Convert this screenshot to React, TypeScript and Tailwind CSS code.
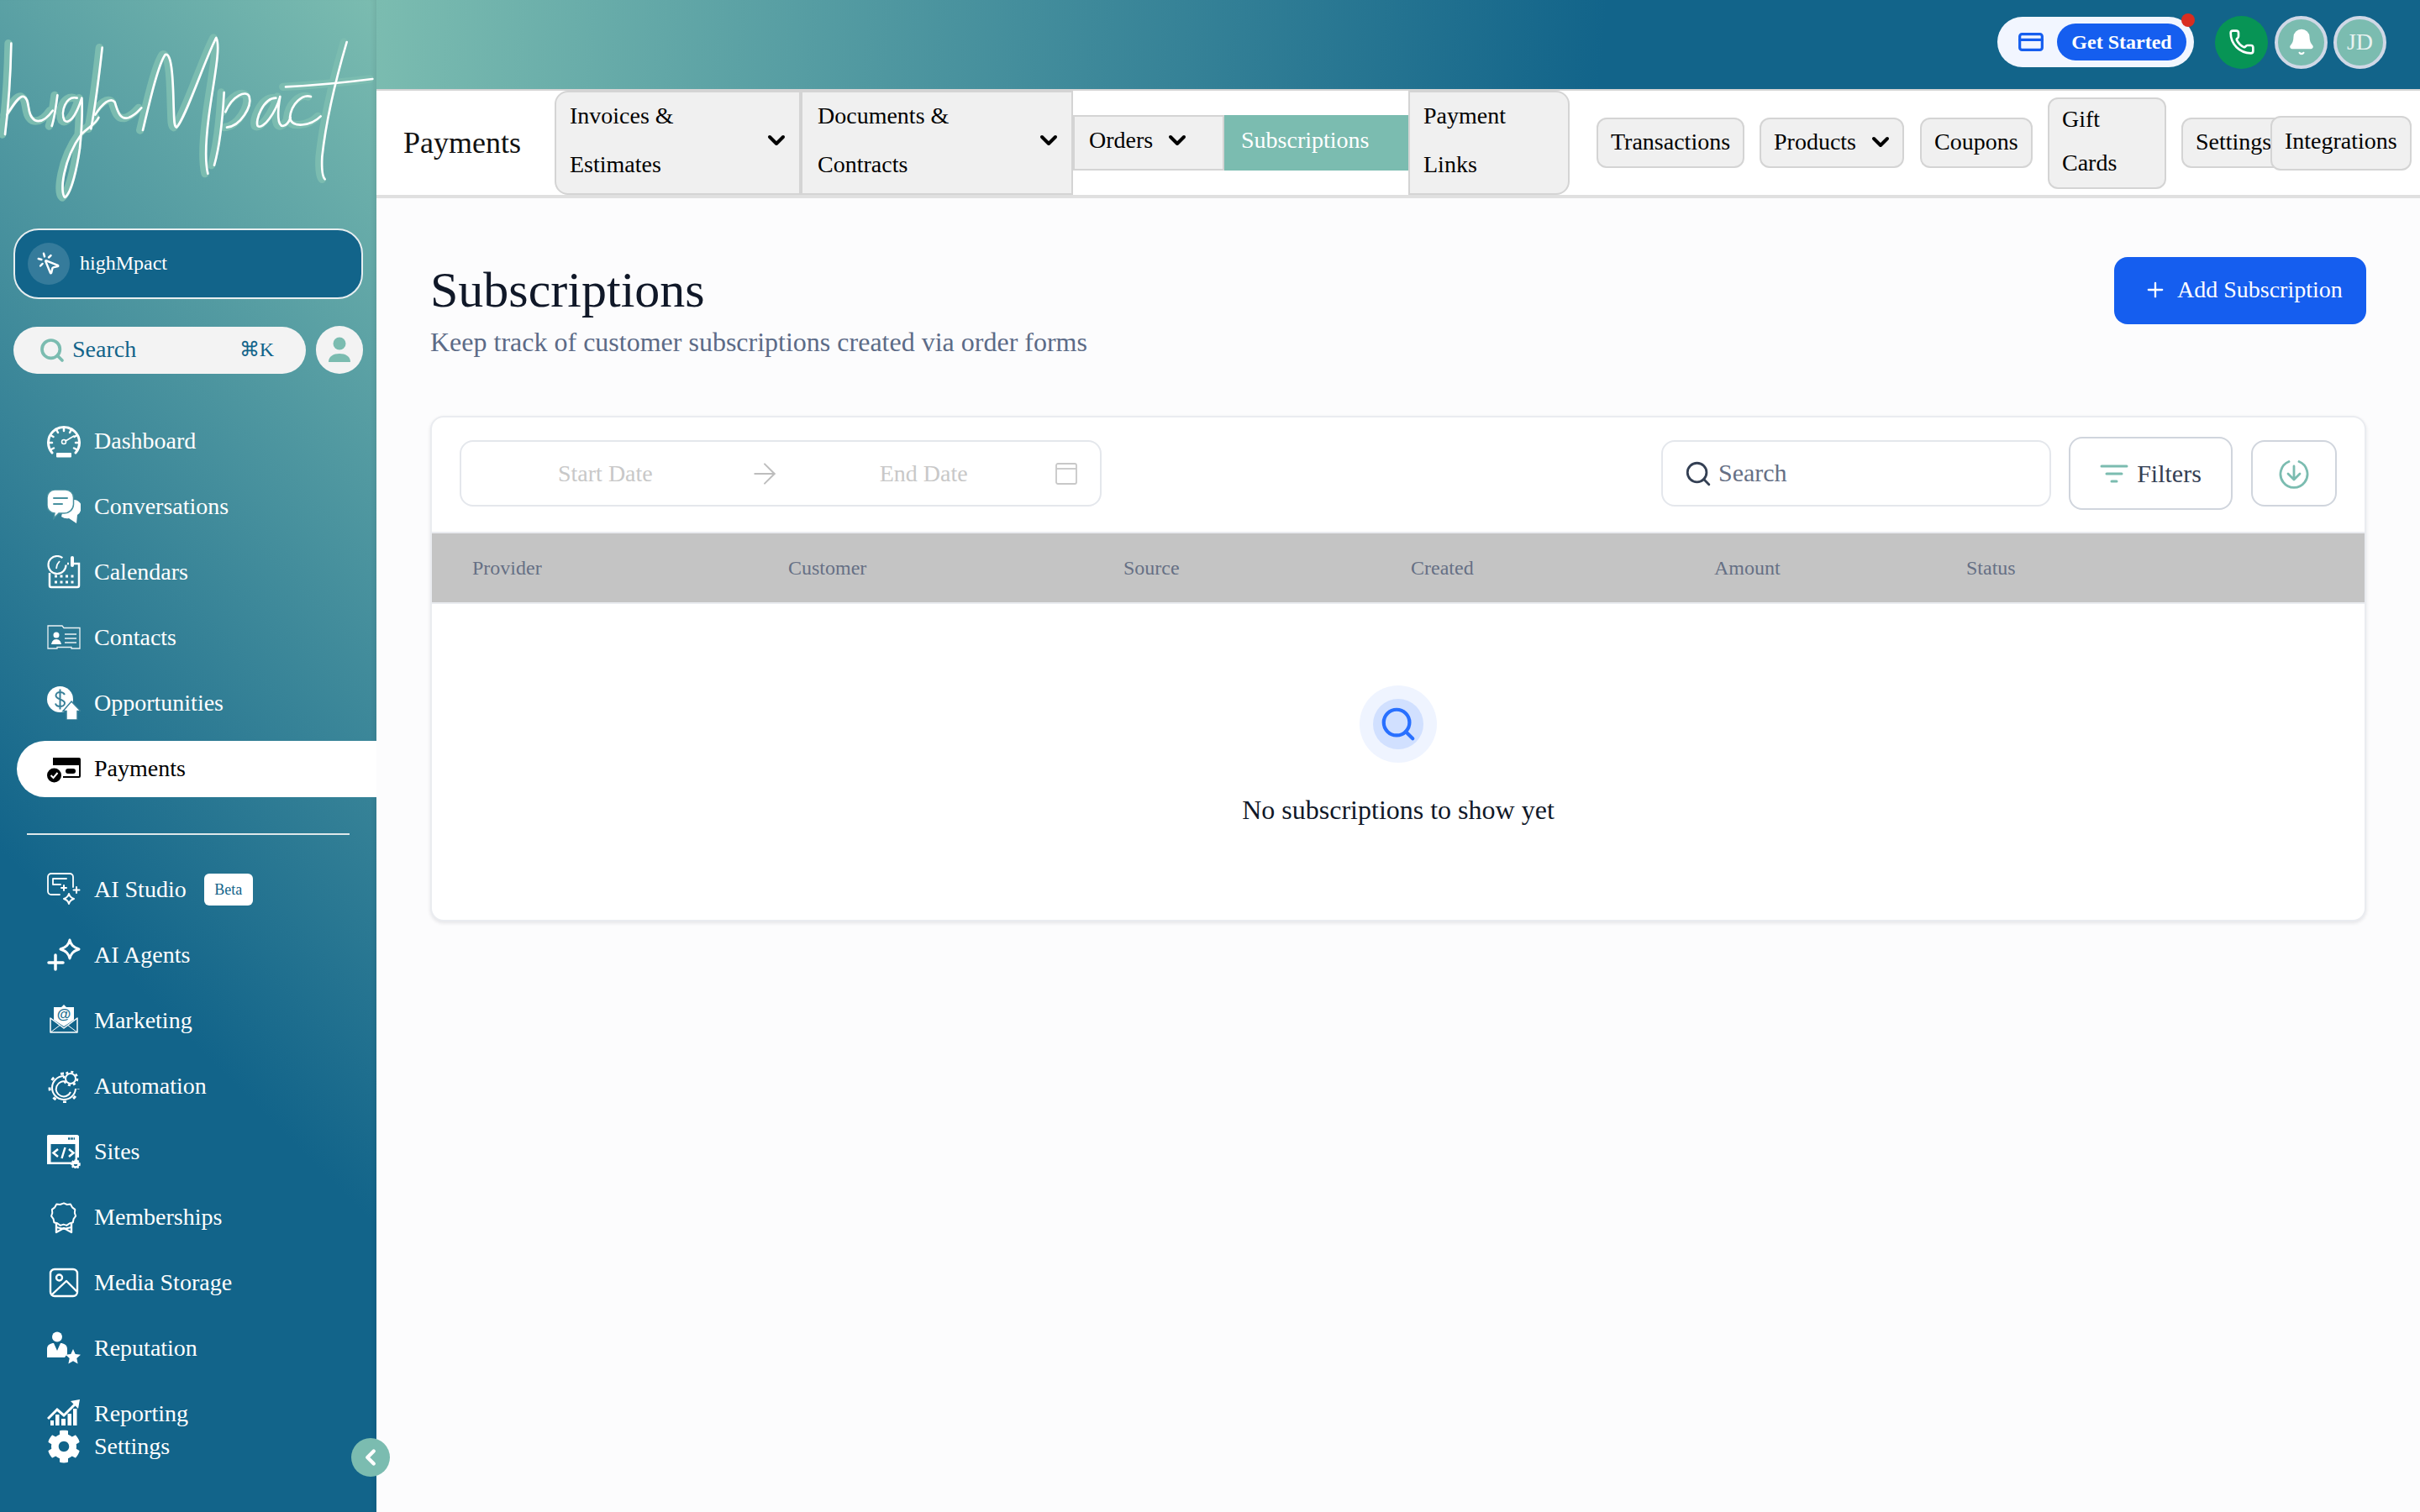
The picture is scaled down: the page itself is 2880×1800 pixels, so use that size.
import type { ReactNode } from "react";
import {
  ArrowRight,
  Bell,
  ChevronDown,
  ChevronLeft,
  CreditCard,
  MousePointerClick,
  Phone,
  Plus,
  Search,
} from "lucide-react";
import { FaCog } from "react-icons/fa";

const logoStrokes = [
  "M40 155 C38 260 28 400 18 480",
  "M25 410 C50 370 70 340 85 345 C110 355 92 410 125 430 C150 440 170 420 188 395",
  "M205 340 C200 380 195 420 185 450",
  "M275 350 C235 340 215 400 230 430 C245 445 270 420 292 350 C296 420 290 480 285 530 C275 600 255 690 232 705 C212 690 225 570 290 480 C320 450 340 445 352 420",
  "M365 170 C355 260 340 380 325 460",
  "M340 410 C365 370 395 345 410 365 C420 400 430 430 460 420 C485 410 495 395 505 385",
  "M510 465 C535 360 565 230 590 195 C615 185 618 300 620 380 C622 420 620 450 630 455 C660 430 740 190 772 135 C790 170 760 300 745 420 C735 500 730 570 742 620",
  "M800 330 C795 420 785 520 765 590",
  "M805 400 C830 340 880 320 890 345 C900 380 860 450 810 455",
  "M985 350 C940 350 910 430 920 450 C940 465 985 400 1000 345 C990 400 990 450 1010 450 C1025 448 1032 435 1037 420",
  "M1110 345 C1080 335 1040 370 1035 420 C1040 460 1110 450 1145 415",
  "M1238 150 C1200 280 1165 420 1150 560 C1148 600 1150 630 1160 640",
  "M1020 310 C1120 305 1230 295 1330 282",
];

function Logo() {
  return (
    <svg viewBox="0 0 1344 720" className="h-[240px] w-[448px] shrink-0" role="img" aria-label="highMpact" fill="none" strokeLinecap="round" strokeLinejoin="round">
      <g stroke="#7bbcb0" strokeWidth="28" transform="translate(-10 0)">
        {logoStrokes.map((d) => (
          <path key={d} d={d} />
        ))}
      </g>
      <g stroke="#ffffff" strokeWidth="8">
        {logoStrokes.map((d) => (
          <path key={d} d={d} />
        ))}
      </g>
    </svg>
  );
}

const box = "h-10 w-10 shrink-0";

const DashboardIcon = () => (
  <svg viewBox="0 0 40 40" className={box} fill="none" stroke="#fff" strokeLinecap="round">
    <path d="M6 34 A18.5 18.5 0 1 1 34 34" strokeWidth="3" />
    <path d="M20 4v4M11 6.5l2 3.5M29 6.500l-2 3.500M4 13l3.500 2M36 13l-3.500 2M2 22h4M38 22h-4M5 30l3-1.500M35 30l-3-1.500" strokeWidth="2.500" />
    <circle cx="20" cy="21" r="2.500" strokeWidth="1.500" />
    <path d="M22 20l10-6" strokeWidth="1.500" />
    <rect x="11" y="34" width="18" height="5.500" rx="1" fill="#fff" stroke="none" />
  </svg>
);

const ConversationsIcon = () => (
  <svg viewBox="0 0 40 40" className={box}>
    <path d="M22 12h9a9 9 0 0 1 9 13 8 8 0 0 1-4 5l-1 10-9-6a12 12 0 0 1-9-2z" fill="#fff" />
    <path d="M9 0h13a9.500 9.500 0 0 1 9.500 9.500v8A11 11 0 0 1 20 28h-6l-6 6 1-6a9.500 9.500 0 0 1-9-9.500v-9A9.500 9.500 0 0 1 9 0z" fill="#fff" stroke="#47909f" strokeWidth="1.500" />
    <path d="M8 10h16M8 17h10" stroke="#47909f" strokeWidth="2" strokeLinecap="round" />
  </svg>
);

const CalendarsIcon = () => (
  <svg viewBox="0 0 40 40" className={box} fill="none" stroke="#fff">
    <path d="M3 21v15a2 2 0 0 0 2 2h31a2 2 0 0 0 2-2V10h-6M26 10h-2" strokeWidth="2.500" />
    <path d="M30 3v9" strokeWidth="4" strokeLinecap="round" />
    <circle cx="12" cy="11.500" r="10.500" strokeWidth="2.200" strokeDasharray="56 10" />
    <path d="M12 11l3-4M12 11l-1 5" strokeWidth="1.800" />
    <path d="M9 25h26M9 32h26" strokeWidth="3" strokeDasharray="3 3.500" />
  </svg>
);

const ContactsIcon = () => (
  <svg viewBox="0 0 40 40" className={box} fill="none" stroke="#fff">
    <path d="M1 6h17l2 2.500h19v24.500h-10v-1.500h-17v1.500h-11z" strokeWidth="1.300" strokeOpacity=".9" />
    <circle cx="11" cy="17" r="3.500" fill="#fff" stroke="none" />
    <path d="M5 28c1-5 4-6 6-6s5 1 6 6z" fill="#fff" stroke="none" />
    <path d="M21 16h14M21 21h14M21 26h14" strokeWidth="1.300" strokeOpacity=".9" />
  </svg>
);

const OpportunitiesIcon = () => (
  <svg viewBox="0 0 40 40" className={box}>
    <circle cx="15.500" cy="15.500" r="15.500" fill="#fff" />
    <path d="M21 10c-1-2-3-3-5.500-3s-5 1.500-5 4 2.500 3.500 5 4.500 5.500 2 5.500 4.500-2.500 4-5.500 4-5-1.500-5.500-3.500M15.500 3.500v24" fill="none" stroke="#377f98" strokeWidth="2" />
    <path d="M29 18l11 11.500h-4V40H23V29.500h-4z" fill="#fff" stroke="#377f98" strokeWidth="1.500" />
  </svg>
);

const PaymentsIcon = () => (
  <svg viewBox="0 0 40 40" className={box}>
    <path d="M7 7h31a2 2 0 0 1 2 2v20a2 2 0 0 1-2 2H19v-2h19V16H7z" fill="#000" />
    <path d="M7 7v8h2v-6h29V7z" fill="#000" />
    <rect x="22" y="20" width="12" height="6" rx="3" fill="#000" />
    <circle cx="8.500" cy="28" r="8.500" fill="#000" />
    <path d="M4.500 28l3 3 5-6" fill="none" stroke="#fff" strokeWidth="2" />
  </svg>
);

const AiStudioIcon = () => (
  <svg viewBox="0 0 40 40" className={box} fill="none" stroke="#fff" strokeWidth="1.800" strokeLinecap="round" strokeLinejoin="round">
    <path d="M15 26H5a4 4 0 0 1-4-4V5a4 4 0 0 1 4-4h22a4 4 0 0 1 4 4v12" />
    <path d="M7 7h16M7 7v7h9" />
    <path d="M20 15v6M17 18h6M35 17v7M31.500 20.500h7" strokeWidth="2" />
    <path d="M26 25c1 4 3 5 6 6-3 1-5 2-6 6-1-4-3-5-6-6 3-1 5-2 6-6z" strokeWidth="2" />
  </svg>
);

const AiAgentsIcon = () => (
  <svg viewBox="0 0 40 40" className={box} fill="none" stroke="#fff" strokeLinecap="round" strokeLinejoin="round">
    <path d="M27 2c1.500 6 4 8.500 11 11-7 2.500-9.500 5-11 11-1.500-6-4-8.500-11-11 7-2.500 9.500-5 11-11z" strokeWidth="3" />
    <path d="M10 20v17M2 29h17" strokeWidth="3.500" />
  </svg>
);

const MarketingIcon = () => (
  <svg viewBox="0 0 40 40" className={box}>
    <path d="M4 17l16 12 16-12v17H4z" fill="none" stroke="#fff" strokeWidth="1.500" strokeLinejoin="round" />
    <path d="M4 34l12-9M36 34l-12-9" stroke="#fff" strokeWidth="1" />
    <path d="M8 4h9l3-3 3 3h9v15l-12 8-12-8z" fill="#fff" />
    <text x="20" y="18" textAnchor="middle" fontSize="17" fontWeight="700" fill="#1e6f90" fontFamily="'Liberation Sans',sans-serif">@</text>
  </svg>
);

const AutomationIcon = () => (
  <svg viewBox="0 0 40 40" className={box} fill="none" stroke="#fff">
    <path d="M20 8a14 14 0 1 0 14 15" strokeWidth="2" />
    <path d="M20 5a17 17 0 1 0 17 18" strokeWidth="3" strokeDasharray="4 9" />
    <path d="M23 15a9 9 0 1 0 5 12" strokeWidth="2" />
    <circle cx="28" cy="11" r="6" strokeWidth="2" />
    <circle cx="28" cy="11" r="8" strokeWidth="2.500" strokeDasharray="3 3.300" />
  </svg>
);

const SitesIcon = () => (
  <svg viewBox="0 0 40 40" className={box}>
    <path d="M2 9h34v26H25v-2.500h8.500V11h-29v21.500H25V35H0V2a1 1 0 0 1 1-1h36a1 1 0 0 1 1 1v25h-2V9H2z" fill="#fff" />
    <rect x="0" y="0" width="37.500" height="9" rx="1.500" fill="#fff" />
    <path d="M25 4.500h8" stroke="#15688b" strokeWidth="2.500" strokeDasharray="2.500 .8" />
    <path d="M13 17l-5.500 4.500L13 26M26 17l5.500 4.500L26 26M21.500 15l-4 13" fill="none" stroke="#fff" strokeWidth="2.500" />
    <circle cx="34" cy="35" r="3.500" fill="none" stroke="#fff" strokeWidth="2.500" />
    <circle cx="34" cy="35" r="5" fill="none" stroke="#fff" strokeWidth="1.500" strokeDasharray="2 1.600" />
  </svg>
);

const MembershipsIcon = () => (
  <svg viewBox="0 0 40 40" className={box} fill="none" stroke="#fff" strokeWidth="2.400" strokeLinejoin="round">
    <path d="M20 2l4.500 2 5-.500 2.500 4.500 4 3-.500 5 1.500 4.500-3 4-1 5-5 1.500-4 3-4.500-1.500-4.500 1.500-4-3-5-1.500-1-5-3-4 1.500-4.500-.500-5 4-3 2.500-4.500 5 .500z" transform="translate(3.400 1.700) scale(.83)" />
    <path d="M11 26v12l9-5 9 5V26" />
    <path d="M11 32l9 2 9-2" strokeWidth="1.800" />
  </svg>
);

const MediaIcon = () => (
  <svg viewBox="0 0 40 40" className={box} fill="none" stroke="#fff" strokeWidth="2.400" strokeLinecap="round" strokeLinejoin="round">
    <rect x="4" y="4" width="32" height="32" rx="5" />
    <circle cx="14.500" cy="14" r="3.500" />
    <path d="M6 34l17-16 12 12" />
  </svg>
);

const ReputationIcon = () => (
  <svg viewBox="0 0 40 40" className={box} fill="#fff">
    <circle cx="12" cy="6.500" r="6" />
    <path d="M0 31V21c0-5 4-7 8-7l4 9 4-9c4 0 8 2 8 7v6l-3 4z" />
    <path d="M31 21l2.700 6 6.300.700-4.700 4.300 1.300 6.500-5.600-3.300-5.600 3.300 1.300-6.500-4.700-4.300 6.300-.700z" />
  </svg>
);

const ReportingIcon = () => (
  <svg viewBox="0 0 40 40" className={box} fill="#fff">
    <path d="M1 26l11-11 8 7L34 8" fill="none" stroke="#fff" strokeWidth="3" />
    <path d="M39 3l-11 2 9 9z" />
    <rect x="4" y="28" width="4" height="6" />
    <rect x="10" y="21" width="4.500" height="13" />
    <rect x="17" y="26" width="5" height="8" />
    <rect x="24.500" y="20" width="4.500" height="14" />
    <rect x="31" y="14" width="4.500" height="20" />
  </svg>
);

type NavItem = { label: string; icon: ReactNode; active?: boolean; badge?: string };

const topNav: NavItem[] = [
  { label: "Dashboard", icon: <DashboardIcon /> },
  { label: "Conversations", icon: <ConversationsIcon /> },
  { label: "Calendars", icon: <CalendarsIcon /> },
  { label: "Contacts", icon: <ContactsIcon /> },
  { label: "Opportunities", icon: <OpportunitiesIcon /> },
  { label: "Payments", icon: <PaymentsIcon />, active: true },
];

const lowerNav: NavItem[] = [
  { label: "AI Studio", icon: <AiStudioIcon />, badge: "Beta" },
  { label: "AI Agents", icon: <AiAgentsIcon /> },
  { label: "Marketing", icon: <MarketingIcon /> },
  { label: "Automation", icon: <AutomationIcon /> },
  { label: "Sites", icon: <SitesIcon /> },
  { label: "Memberships", icon: <MembershipsIcon /> },
  { label: "Media Storage", icon: <MediaIcon /> },
  { label: "Reputation", icon: <ReputationIcon /> },
  { label: "Reporting", icon: <ReportingIcon /> },
];

function NavRow({ item }: { item: NavItem }) {
  return (
    <div className="flex h-[78px] items-center">
      <div
        className={
          item.active
            ? "ml-5 flex h-[67px] flex-1 items-center gap-4 rounded-l-full bg-white pl-9 text-[28px] text-black"
            : "ml-5 flex h-[67px] flex-1 items-center gap-4 pl-9 text-[28px] text-white"
        }
      >
        {item.icon}
        <span>{item.label}</span>
        {item.badge && (
          <span className="ml-[5px] flex h-[38px] w-[58px] items-center justify-center rounded-md bg-white text-[18px] text-[#12648a]">
            {item.badge}
          </span>
        )}
      </div>
    </div>
  );
}

function Sidebar() {
  return (
    <aside className="relative flex h-full w-[448px] shrink-0 flex-col bg-[linear-gradient(225deg,#7bbcb0_0%,#12648a_65%)] shadow-[inset_-6px_0_6px_-4px_rgba(0,0,0,0.08)]">
      <Logo />
      <div className="mx-4 mt-8 flex h-[84px] items-center gap-[12px] rounded-[30px] border-2 border-[#e6eef0] bg-[#12648a] pb-[2px] pl-[15px] text-[24px] text-white">
        <div className="mt-[2px] flex h-[50px] w-[50px] items-center justify-center rounded-full bg-white/15">
          <MousePointerClick size={30} strokeWidth={2} />
        </div>
        highMpact
      </div>
      <div className="mx-4 mt-8 flex items-center gap-3">
        <div className="flex h-14 flex-1 items-center rounded-full bg-[#f3f3f3] pb-[2px] pl-[30px] pr-[38px] text-[28px] text-[#12648a]">
          <Search size={32} strokeWidth={2.8} className="mr-[8px] mt-[2px] text-[#7bbcb0]" />
          <span>Search</span>
          <span className="ml-auto text-[24px]">⌘K</span>
        </div>
        <div className="flex h-[57px] w-14 items-center justify-center rounded-full bg-[#f3f3f3]">
          <svg viewBox="0 0 28 32" className="h-8 w-7" fill="#7bbcb0">
            <circle cx="14" cy="8" r="7.500" />
            <path d="M1 30c0-7 6-10 13-10s13 3 13 10z" />
          </svg>
        </div>
      </div>
      <nav className="mt-[41px]">
        {topNav.map((item) => (
          <NavRow key={item.label} item={item} />
        ))}
      </nav>
      <div className="mx-8 mt-[38px] h-[2px] bg-[#dfe8ea]" />
      <nav className="mt-[26px]">
        {lowerNav.map((item) => (
          <NavRow key={item.label} item={item} />
        ))}
        <div className="-mt-5 flex h-10 items-center gap-4 pl-14 text-[28px] text-white">
          <FaCog className="h-10 w-10" />
          Settings
        </div>
      </nav>
      <button className="absolute left-[418px] top-[1712px] z-10 flex h-[46px] w-[46px] items-center justify-center rounded-full bg-[#7bbcb0] text-white">
        <ChevronLeft size={30} strokeWidth={3.5} />
      </button>
    </aside>
  );
}

function TopBar() {
  return (
    <header className="flex h-[108px] shrink-0 items-center justify-end border-b-2 border-[#d4d4d4] bg-[linear-gradient(95deg,#7bbcb0_0%,#12648a_60%)] pb-[6px] pr-10">
      <div className="relative flex h-[60px] w-[234px] items-center rounded-full bg-[#f2f6ff] pl-[24px]">
        <CreditCard size={32} strokeWidth={2.4} className="text-[#155eef]" />
        <div className="ml-[15px] flex h-11 w-[154px] items-center justify-center rounded-full bg-[#155eef] text-[24px] font-bold text-white">
          Get Started
        </div>
        <span className="absolute right-[-1px] top-[-4px] h-4 w-4 rounded-full bg-[#d92d20]" />
      </div>
      <div className="ml-[25px] flex h-[63px] w-[63px] items-center justify-center rounded-full bg-[#079455] text-white">
        <Phone size={32} strokeWidth={2} />
      </div>
      <div className="ml-[8px] flex h-[63px] w-[63px] items-center justify-center rounded-full border-4 border-[#d0d8e6] bg-[#7bbcb0] text-white">
        <Bell size={34} fill="#fff" strokeWidth={1.5} />
      </div>
      <div className="ml-[7px] flex h-[63px] w-[63px] items-center justify-center rounded-full border-4 border-[#d0d8e6] bg-[#7bbcb0] text-[28px] text-[#e8f2f0]">
        JD
      </div>
    </header>
  );
}

const tab = "flex shrink-0 items-center border-2 border-[#d4d4d4] bg-[#f0f0f0] text-[28px] text-black";

function SubNav() {
  return (
    <div className="flex h-[128px] shrink-0 items-center border-b-4 border-[#e0e0e0] bg-white">
      <div className="w-[212px] shrink-0 pl-8 text-[36px] text-[#111]">Payments</div>
      <div className={`${tab} h-[124px] w-[293px] justify-between rounded-l-2xl pb-[7px] pl-[16px] pr-[11px] leading-[58px]`}>
        <span>
          Invoices &amp;
          <br />
          Estimates
        </span>
        <ChevronDown size={32} strokeWidth={3} />
      </div>
      <div className={`${tab} h-[124px] w-[324px] justify-between pb-[7px] pl-[18px] pr-[11px] leading-[58px]`}>
        <span>
          Documents &amp;
          <br />
          Contracts
        </span>
        <ChevronDown size={32} strokeWidth={3} />
      </div>
      <div className={`${tab} h-[66px] w-[180px] gap-[13px] pb-[6px] pl-[17px]`}>
        Orders
        <ChevronDown size={32} strokeWidth={3} />
      </div>
      <div className="flex h-[66px] w-[219px] shrink-0 items-center bg-[#7bbcb0] pb-[6px] pl-5 text-[28px] text-white">Subscriptions</div>
      <div className={`${tab} h-[124px] w-[192px] rounded-r-2xl pb-[7px] pl-[16px] leading-[58px]`}>
        <span>
          Payment
          <br />
          Links
        </span>
      </div>
      <div className={`${tab} ml-[32px] h-[60px] w-[176px] rounded-xl pb-[3px] pl-[15px]`}>Transactions</div>
      <div className={`${tab} ml-[18px] h-[60px] w-[172px] gap-[13px] rounded-xl pb-[3px] pl-[15px]`}>
        Products
        <ChevronDown size={32} strokeWidth={3} />
      </div>
      <div className={`${tab} ml-[19px] h-[60px] w-[134px] rounded-xl pb-[3px] pl-[15px]`}>Coupons</div>
      <div className={`${tab} ml-[18px] h-[109px] w-[141px] rounded-xl pb-[4px] pl-[15px] leading-[52px]`}>
        <span>
          Gift
          <br />
          Cards
        </span>
      </div>
      <div className={`${tab} ml-[18px] h-[60px] w-[123px] rounded-xl pb-[3px] pl-[15px]`}>Settings</div>
      <div className={`${tab} relative -ml-[17px] h-[65px] w-[168px] rounded-xl pb-[5px] pl-[15px]`}>Integrations</div>
    </div>
  );
}

const columns = [
  { label: "Provider", width: "w-[376px]" },
  { label: "Customer", width: "w-[399px]" },
  { label: "Source", width: "w-[342px]" },
  { label: "Created", width: "w-[361px]" },
  { label: "Amount", width: "w-[300px]" },
  { label: "Status", width: "w-[200px]" },
];

function SubscriptionsCard() {
  return (
    <section className="mt-[66px] rounded-2xl border-2 border-[#eaecf0] bg-white shadow-[0_2px_4px_rgba(16,24,40,0.1)]">
      <div className="flex h-[136px] items-center px-[33px] pb-[3px]">
        <div className="flex h-[79px] w-[764px] items-center rounded-2xl border-2 border-[#e4e7ec] pl-[115px] text-[28px] text-[#c8c8c8]">
          <span>Start Date</span>
          <ArrowRight size={40} strokeWidth={1.2} className="ml-[113px] text-[#bdbdbd]" />
          <span className="ml-[117px]">End Date</span>
          <svg viewBox="0 0 26 26" className="ml-[104px] h-[26px] w-[26px]" fill="none" stroke="#c8c8c8" strokeWidth="1.800">
            <rect x="1" y="1" width="24" height="24" rx="2" />
            <path d="M1 7h24" />
          </svg>
        </div>
        <div className="ml-auto flex h-[79px] w-[464px] items-center rounded-2xl border-2 border-[#e4e7ec] pb-[2px] pl-[25px] text-[30px] text-[#667085]">
          <Search size={34} strokeWidth={2} className="mr-[7px] mt-[2px] text-[#344054]" />
          Search
        </div>
        <div className="ml-[21px] flex h-[87px] w-[195px] items-center justify-center gap-[10px] rounded-2xl border-2 border-[#d0d5dd] text-[30px] text-[#344054]">
          <svg viewBox="0 0 34 24" className="h-6 w-[34px]" fill="none" stroke="#7bbcb0" strokeWidth="3" strokeLinecap="round">
            <path d="M2 3h30M8 12h18M14 21h6" />
          </svg>
          Filters
        </div>
        <div className="ml-[22px] flex h-[79px] w-[102px] items-center justify-center rounded-2xl border-2 border-[#d0d5dd]">
          <svg viewBox="0 0 36 36" className="h-9 w-9" fill="none" stroke="#7bbcb0" strokeWidth="2.800" strokeLinecap="round" strokeLinejoin="round">
            <path d="M12 3.500a16 16 0 1 0 12 0" />
            <path d="M18 9v16M11 18l7 7 7-7" />
          </svg>
        </div>
      </div>
      <div className="flex h-[86px] items-center border-y-2 border-[#eaecf0] bg-[#c4c4c4] pl-[48px] text-[24px] text-[#667085]">
        {columns.map((col) => (
          <div key={col.label} className={col.width}>
            {col.label}
          </div>
        ))}
      </div>
      <div className="flex h-[376px] flex-col items-center pt-[97px]">
        <div className="flex h-[92px] w-[92px] items-center justify-center rounded-full bg-[#eff4ff]">
          <div className="flex h-[60px] w-[60px] items-center justify-center rounded-full bg-[#d1e0ff]">
            <Search size={46} strokeWidth={2.2} className="text-[#2970ff]" />
          </div>
        </div>
        <p className="mt-[34px] text-[32px] leading-[44px] text-[#101828]">No subscriptions to show yet</p>
      </div>
    </section>
  );
}

export default function App() {
  return (
    <div className="flex h-[1800px] w-[2880px] overflow-hidden bg-[#fcfcfd] font-['Liberation_Serif',serif]">
      <Sidebar />
      <div className="flex min-w-0 flex-1 flex-col">
        <TopBar />
        <SubNav />
        <main className="px-16 pt-[70px]">
          <div className="flex items-start justify-between">
            <div className="pt-[3px]">
              <h1 className="text-[60px] leading-[72px] text-[#101828]">Subscriptions</h1>
              <p className="mt-[4px] text-[32px] leading-[44px] text-[#5c6b87]">Keep track of customer subscriptions created via order forms</p>
            </div>
            <button className="flex h-20 w-[300px] items-center gap-[12px] rounded-2xl bg-[#155eef] pb-[2px] pl-[35px] text-[28px] text-white">
              <Plus size={28} strokeWidth={2} />
              Add Subscription
            </button>
          </div>
          <SubscriptionsCard />
        </main>
      </div>
    </div>
  );
}
